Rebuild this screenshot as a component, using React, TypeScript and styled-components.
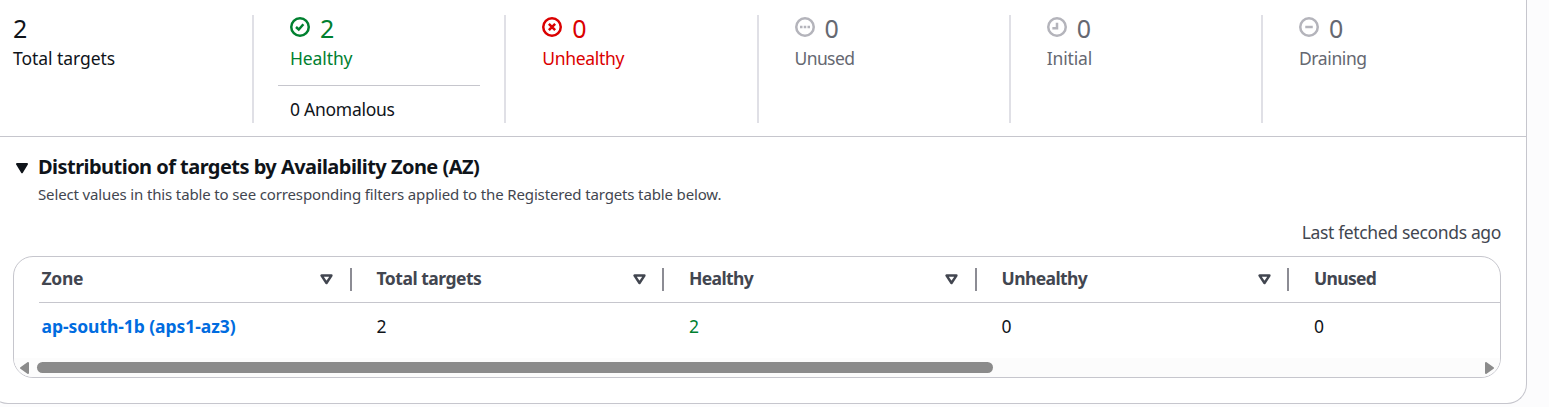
import React from "react";
import styled, { createGlobalStyle } from "styled-components";

const GlobalStyle = createGlobalStyle`
  * { box-sizing: border-box; }
  body {
    margin: 0;
    background: #fcfcfd;
    color: #0f141a;
    font-family: "Noto Sans", "Open Sans", sans-serif;
    font-size: 17.5px;
    line-height: 25px;
    overflow: hidden;
  }
`;

const Page = styled.main`
  height: 407px;
  overflow: hidden;
`;

const Card = styled.section`
  width: 1539px;
  height: 404px;
  margin-left: -12px;
  background: #fff;
  border: 1px solid #c6c6cd;
  border-top: 0;
  border-radius: 0 0 20px 20px;
`;

const StatGrid = styled.div`
  display: grid;
  grid-template-columns: 240px repeat(5, 252.25px);
  height: 137px;
  padding: 15px 0 13px 23px;
  border-bottom: 1px solid #c6c6cd;
`;

const Stat = styled.div<{ $tone: string; $first?: boolean }>`
  padding-left: ${(p) => (p.$first ? 1 : 36)}px;
  border-left: ${(p) => (p.$first ? "0" : "2px solid #e0e0e6")};
  color: ${(p) => p.$tone};
`;

const StatTop = styled.div`
  display: flex;
  gap: 10px;
  height: 27px;
  font-size: 25px;
  line-height: 27px;
`;

const StatusSvg = styled.svg`
  width: 20px;
  height: 20px;
  margin-top: 2px;
  flex: none;
  fill: none;
  stroke: currentColor;
  stroke-width: 2;
`;

const IconTone = styled.span<{ $color?: string }>`
  display: flex;
  color: ${(p) => p.$color ?? "inherit"};
`;

const Text = styled.span<{ $track?: number }>`
  white-space: nowrap;
  letter-spacing: ${(p) => p.$track ?? 0}px;
`;

const StatLabel = styled.div`
  margin-top: 4px;
`;

const Anomalous = styled.div`
  width: 202px;
  margin: 14px 0 0 -12px;
  padding: 11px 0 0 12px;
  border-top: 1px solid #c6c6cd;
  color: #0f141a;
`;

const Section = styled.div`
  padding: 17px 25px 0 24px;
`;

const Heading = styled.h3`
  display: flex;
  align-items: center;
  gap: 10px;
  margin: 0;
  padding-left: 3px;
  height: 26px;
  font-size: 20px;
  line-height: 26px;
`;

const CaretSvg = styled.svg`
  width: 12px;
  height: 11px;
  margin-top: 2px;
`;

const Description = styled.p`
  margin: 2px 0 0 25px;
  font-size: 15px;
  line-height: 25px;
  color: #424650;
`;

const Fetched = styled.div`
  margin-top: 13px;
  text-align: right;
  color: #424650;
`;

const TableBox = styled.div`
  display: flex;
  flex-direction: column;
  height: 122px;
  margin-top: 11px;
  border: 1px solid #c6c6cd;
  border-radius: 20px;
  overflow: hidden;
`;

const Row = styled.div<{ $head?: boolean }>`
  display: grid;
  grid-template-columns: repeat(5, 312.5px);
  align-items: center;
  flex: none;
  height: ${(p) => (p.$head ? 46 : 55)}px;
  margin-left: 25px;
  border-bottom: ${(p) => (p.$head ? "1px solid #c6c6cd" : "0")};
  overflow: hidden;
`;

const HeadCell = styled.div`
  display: flex;
  align-items: center;
  justify-content: space-between;
  height: 23px;
  padding: 0 16.5px 0 0;
  border-right: 2px solid #8c8c94;
  font-weight: 700;
  color: #424650;
`;

const CellText = styled.div<{ $inset: number; $color?: string; $bold?: boolean }>`
  margin-top: -2px;
  padding-left: ${(p) => p.$inset}px;
  color: ${(p) => p.$color ?? "inherit"};
  font-weight: ${(p) => (p.$bold ? 700 : 400)};
`;

const BodyCell = styled(CellText)`
  margin-top: -9px;
`;

const Scrollbar = styled.div`
  display: flex;
  align-items: center;
  justify-content: space-between;
  flex: 1;
  padding: 0 6px;
  background: #fcfcfc;
`;

const ScrollTrack = styled.div`
  flex: 1;
  margin: 0 8px;
`;

const ScrollThumb = styled.div`
  width: 956px;
  height: 11px;
  border-radius: 6px;
  background: #8b8b8b;
`;

const Circle = () => <circle cx="8" cy="8" r="7" />;

const icons: Record<string, React.ReactNode> = {
  check: <path d="m4.8 8 2.2 2 3.7-4.2" />,
  cross: <path d="m5.5 5.5 5 5m0-5-5 5" />,
  dots: <path d="M4 8h2M7 8h2M10 8h2" />,
  clock: <path d="M8 4.6V9H4.3" />,
  minus: <path d="M5 8h6" />,
};

const StatusIcon = ({ name }: { name: string }) => (
  <StatusSvg viewBox="0 0 16 16">
    <Circle />
    {icons[name]}
  </StatusSvg>
);

const Caret = () => (
  <CaretSvg viewBox="0 0 12 11">
    <path d="M1 1h10L6 9.3z" fill="#0f141a" stroke="#0f141a" strokeWidth="2" strokeLinejoin="round" />
  </CaretSvg>
);

const SortIcon = () => (
  <svg width="13" height="11" viewBox="0 0 13 11">
    <path d="M1.6 1.6h9.8L6.5 9z" fill="none" stroke="#424650" strokeWidth="2.5" strokeLinejoin="round" />
  </svg>
);

const ScrollArrow = ({ right }: { right?: boolean }) => (
  <svg width="9" height="12" viewBox="0 0 9 12">
    <path
      d={right ? "M1 1v10l7-5z" : "M8 1v10L1 6z"}
      fill="#8b8b8b"
      stroke="#8b8b8b"
      strokeWidth="2"
      strokeLinejoin="round"
    />
  </svg>
);

const grey = "#656871";
const iconGrey = "#b4b4bb";

const stats = [
  { label: "Total targets", value: 2, tone: "#0f141a", track: -0.05 },
  { label: "Healthy", value: 2, tone: "#00802f", icon: "check", track: -0.12, anomalous: true },
  { label: "Unhealthy", value: 0, tone: "#db0000", icon: "cross", track: -0.3 },
  { label: "Unused", value: 0, tone: grey, icon: "dots", iconColor: iconGrey, track: -0.6 },
  { label: "Initial", value: 0, tone: grey, icon: "clock", iconColor: iconGrey, track: -0.15 },
  { label: "Draining", value: 0, tone: grey, icon: "minus", iconColor: iconGrey, track: -0.4 },
];

const columns = [
  { label: "Zone", track: -0.3 },
  { label: "Total targets", track: -0.5 },
  { label: "Healthy", track: -0.62 },
  { label: "Unhealthy", track: -0.6 },
  { label: "Unused", track: -0.7 },
];

const cells = [
  { value: "ap-south-1b (aps1-az3)", color: "#006ce0", bold: true, track: -0.06 },
  { value: "2" },
  { value: "2", color: "#00802f" },
  { value: "0" },
  { value: "0" },
];

const inset = (i: number) => (i === 0 ? 2.5 : 25);

export default function App() {
  return (
    <Page>
      <GlobalStyle />
      <Card>
        <StatGrid>
          {stats.map((s, i) => (
            <Stat key={s.label} $tone={s.tone} $first={i === 0}>
              <StatTop>
                {s.icon && (
                  <IconTone $color={s.iconColor}>
                    <StatusIcon name={s.icon} />
                  </IconTone>
                )}
                <Text>{s.value}</Text>
              </StatTop>
              <StatLabel>
                <Text $track={s.track}>{s.label}</Text>
              </StatLabel>
              {s.anomalous && (
                <Anomalous>
                  <Text $track={-0.27}>0 Anomalous</Text>
                </Anomalous>
              )}
            </Stat>
          ))}
        </StatGrid>
        <Section>
          <Heading>
            <Caret />
            <Text $track={-0.54}>Distribution of targets by Availability Zone (AZ)</Text>
          </Heading>
          <Description>
            <Text $track={-0.14}>
              Select values in this table to see corresponding filters applied to the Registered targets table below.
            </Text>
          </Description>
          <Fetched>
            <Text $track={-0.35}>Last fetched seconds ago</Text>
          </Fetched>
          <TableBox>
            <Row $head>
              {columns.map((c, i) => (
                <HeadCell key={c.label}>
                  <CellText $inset={inset(i)} $bold>
                    <Text $track={c.track}>{c.label}</Text>
                  </CellText>
                  <SortIcon />
                </HeadCell>
              ))}
            </Row>
            <Row>
              {cells.map((c, i) => (
                <BodyCell key={i} $inset={inset(i)} $color={c.color} $bold={c.bold}>
                  <Text $track={c.track}>{c.value}</Text>
                </BodyCell>
              ))}
            </Row>
            <Scrollbar>
              <ScrollArrow />
              <ScrollTrack>
                <ScrollThumb />
              </ScrollTrack>
              <ScrollArrow right />
            </Scrollbar>
          </TableBox>
        </Section>
      </Card>
    </Page>
  );
}
